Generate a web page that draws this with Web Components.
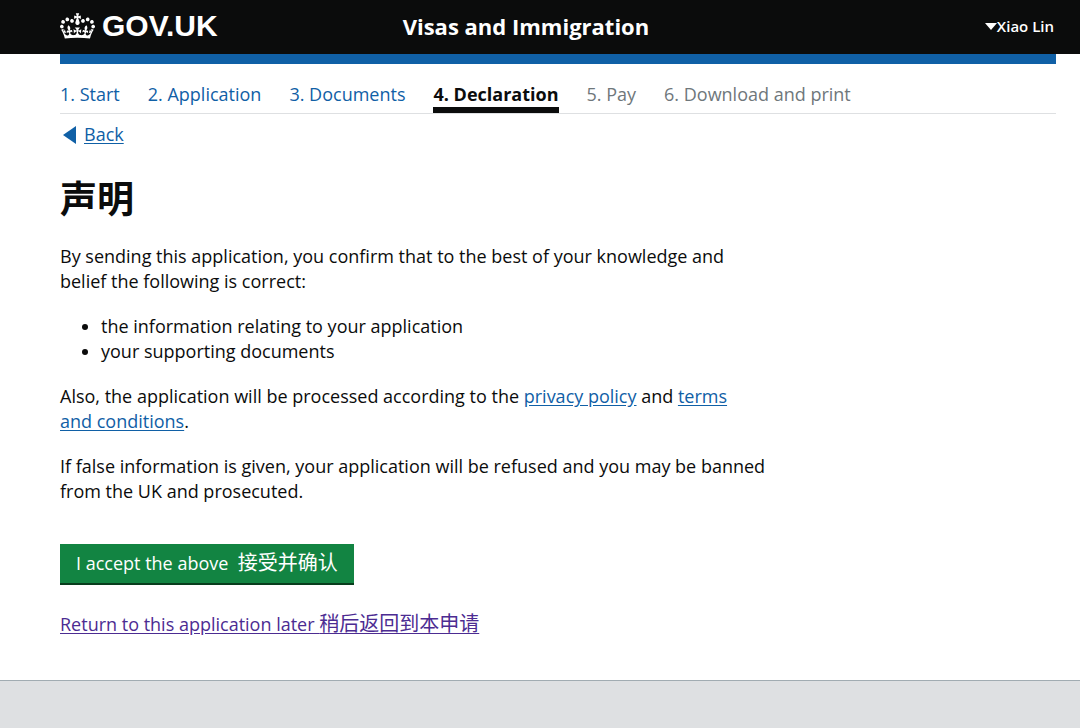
<!DOCTYPE html>
<html lang="en">
<head>
<meta charset="utf-8">
<meta name="viewport" content="width=device-width, initial-scale=1">
<title>Declaration - Visas and Immigration - GOV.UK</title>
<style>
body {
    margin: 0;
    min-height: 100vh;
    display: flex;
    flex-direction: column;
    color: #0b0c0c;
    background-color: #fff;
    font-family: "Open Sans", "Noto Sans CJK SC", sans-serif;
    font-size: 18px;
    line-height: 25px;
}
</style>
</head>
<body>
<visa-header user="Xiao Lin">Visas and Immigration</visa-header>

<page-container>
    <step-nav>
        <step-link href="#start">1. Start</step-link>
        <step-link href="#application">2. Application</step-link>
        <step-link href="#documents">3. Documents</step-link>
        <step-link current>4. Declaration</step-link>
        <step-link>5. Pay</step-link>
        <step-link>6. Download and print</step-link>
    </step-nav>
    <back-link href="#documents">Back</back-link>
    <declaration-form></declaration-form>
</page-container>

<page-footer></page-footer>

<script>
const template_header = document.createElement("template");
template_header.innerHTML = `
<style>
:host {
    display: block;
    color: #fff;
    background-color: #0b0c0c;
}

.wrapper {
    display: grid;
    grid-template-columns: 1fr 2fr;
    gap: 16px;
    align-items: center;
    margin: 0 24px 0 60px;
    padding: 11px 0 13px;
}

.logo {
    display: flex;
    align-items: center;
    gap: 7px;
    color: inherit;
    font: bold 30px/30px "Liberation Sans", Arial, sans-serif;
    text-decoration: none;
}

.right {
    display: flex;
    justify-content: space-between;
    align-items: center;
}

.title {
    font-size: 22px;
    font-weight: bold;
}

button {
    display: flex;
    align-items: center;
    padding: 0 2px;
    border: 0;
    color: inherit;
    background: none;
    font: inherit;
    font-size: 15px;
    font-weight: 600;
    cursor: pointer;
}
</style>

<header class="wrapper">
    <a class="logo" href="#home">
        <svg width="35" height="26" viewBox="0 0 132 97" fill="currentColor" aria-hidden="true">
            <path fill-rule="evenodd" d="M25 30.2c3.5 1.5 7.7-.2 9.1-3.7 1.5-3.6-.2-7.8-3.9-9.2-3.6-1.4-7.6.3-9.1 3.9-1.4 3.5.3 7.5 3.9 9zM9 39.5c3.6 1.5 7.8-.2 9.2-3.7 1.5-3.6-.2-7.8-3.9-9.1-3.6-1.5-7.6.2-9.1 3.8-1.4 3.5.3 7.5 3.8 9zM4.4 57.2c3.5 1.5 7.7-.2 9.1-3.8 1.5-3.6-.2-7.7-3.9-9.1-3.5-1.5-7.6.3-9.1 3.8-1.4 3.5.3 7.6 3.9 9.1zm38.3-21.4c3.5 1.5 7.7-.2 9.1-3.8 1.5-3.6-.2-7.7-3.9-9.1-3.6-1.5-7.6.3-9.1 3.8-1.3 3.6.4 7.7 3.9 9.1zm64.4-5.6c-3.6 1.5-7.8-.2-9.1-3.7-1.5-3.6.2-7.8 3.8-9.2 3.6-1.4 7.7.3 9.2 3.9 1.3 3.5-.4 7.5-3.9 9zm15.9 9.3c-3.6 1.5-7.7-.2-9.1-3.7-1.5-3.6.2-7.8 3.7-9.1 3.6-1.5 7.7.2 9.2 3.8 1.5 3.5-.3 7.5-3.8 9zm4.7 17.7c-3.6 1.5-7.8-.2-9.2-3.8-1.5-3.6.2-7.7 3.9-9.1 3.6-1.5 7.7.3 9.2 3.8 1.3 3.5-.4 7.6-3.9 9.1zM89.3 35.8c-3.6 1.5-7.8-.2-9.2-3.8-1.4-3.6.2-7.7 3.9-9.1 3.6-1.5 7.7.3 9.2 3.8 1.4 3.6-.3 7.7-3.9 9.1zM69.7 17.7l8.9 4.7V9.3l-8.9 2.8c-.2-.3-.5-.6-.9-.9L72.4 0H59.6l3.5 11.2c-.3.3-.6.5-.9.9l-8.8-2.8v13.1l8.8-4.7c.3.3.6.7.9.9l-5 15.4v.1c-.2.8-.4 1.6-.4 2.4 0 4.1 3.1 7.5 7 8.1h.2c.3 0 .7.1 1 .1.4 0 .7 0 1-.1h.2c4-.6 7.1-4.1 7.1-8.1 0-.8-.1-1.7-.4-2.4V34l-5.1-15.4c.4-.2.7-.6 1-.9zM66 92.8c16.9 0 32.8 1.1 47.1 3.2 4-16.9 8.9-26.7 14-33.5l-9.6-3.4c1 4.9 1.1 7.2 0 10.2-1.5-1.4-3-4.3-4.2-8.7L108.6 76c2.8-2 5-3.2 7.5-3.3-4.4 9.4-10 11.9-13.6 11.2-4.3-.8-6.3-4.6-5.6-7.9 1-4.7 5.7-5.9 8-.5 4.3-8.7-3-11.4-7.6-8.8 7.1-7.2 7.9-13.5 2.1-21.1-8 6.1-8.1 12.3-4.5 20.8-4.7-5.4-12.1-2.5-9.5 6.2 3.4-5.2 7.9-2 7.2 3.1-.6 4.3-6.4 7.8-13.5 7.2-10.3-.9-10.9-8-11.2-13.8 2.5-.5 7.1 1.8 11 7.3L80.2 60c-4.1 4.4-8 5.3-12.3 5.4 1.4-4.4 8-11.6 8-11.6H55.5s6.4 7.2 7.9 11.6c-4.2-.1-8-1-12.3-5.4l1.4 16.4c3.9-5.5 8.5-7.7 10.9-7.3-.3 5.8-.9 12.8-11.1 13.8-7.2.6-12.9-2.9-13.5-7.2-.7-5 3.8-8.3 7.1-3.1 2.7-8.7-4.6-11.6-9.4-6.2 3.7-8.5 3.6-14.7-4.6-20.8-5.8 7.6-5 13.9 2.2 21.1-4.7-2.6-11.9.1-7.7 8.8 2.3-5.5 7.1-4.2 8.1.5.7 3.3-1.3 7.1-5.7 7.9-3.5.7-9-1.8-13.5-11.2 2.5.1 4.7 1.3 7.5 3.3l-4.7-15.4c-1.2 4.4-2.7 7.2-4.3 8.7-1.1-3-.9-5.3 0-10.2l-9.5 3.4c5 6.9 9.9 16.7 14 33.5 14.8-2.1 30.8-3.2 47.7-3.2z"/>
        </svg>
        <span>GOV.UK</span>
    </a>
    <div class="right">
        <span class="title"><slot></slot></span>
        <button type="button" aria-haspopup="true">
            <svg width="12" height="7" viewBox="0 0 12 7" fill="currentColor" aria-hidden="true"><path d="M0 0h12L6 7z"/></svg>
            <span class="user"></span>
        </button>
    </div>
</header>
`;

class VisaHeader extends HTMLElement {
  constructor() {
    super();
    this.attachShadow({ mode: "open" });
    this.shadowRoot.appendChild(template_header.content.cloneNode(true));
    this.shadowRoot.querySelector(".user").textContent = this.getAttribute("user");
  }
}

const template_container = document.createElement("template");
template_container.innerHTML = `
<style>
:host {
    display: block;
    margin: 0 24px 0 60px;
    border-top: 10px solid #1060a6;
}
</style>
<slot></slot>
`;

class PageContainer extends HTMLElement {
  constructor() {
    super();
    this.attachShadow({ mode: "open" });
    this.shadowRoot.appendChild(template_container.content.cloneNode(true));
  }
}

const template_nav = document.createElement("template");
template_nav.innerHTML = `
<style>
:host {
    display: block;
}

nav {
    display: flex;
    flex-wrap: wrap;
    gap: 0 28px;
    padding-top: 18px;
    border-bottom: 1px solid #dee0e2;
}
</style>
<nav aria-label="Application steps"><slot></slot></nav>
`;

class StepNav extends HTMLElement {
  constructor() {
    super();
    this.attachShadow({ mode: "open" });
    this.shadowRoot.appendChild(template_nav.content.cloneNode(true));
  }
}

const template_step = document.createElement("template");
template_step.innerHTML = `
<style>
:host {
    display: block;
    color: #6f777b;
    border-bottom: 6px solid transparent;
}

:host([current]) {
    color: #0b0c0c;
    border-bottom-color: #0b0c0c;
    font-weight: bold;
}

a {
    color: #1060a6;
    text-decoration: none;
}
</style>
`;

class StepLink extends HTMLElement {
  constructor() {
    super();
    this.attachShadow({ mode: "open" });
    this.shadowRoot.appendChild(template_step.content.cloneNode(true));
    // steps that cannot be opened yet have no href
    const step = document.createElement(this.hasAttribute("href") ? "a" : "span");
    if (this.hasAttribute("href")) {
      step.setAttribute("href", this.getAttribute("href"));
    }
    if (this.hasAttribute("current")) {
      step.setAttribute("aria-current", "step");
    }
    step.appendChild(document.createElement("slot"));
    this.shadowRoot.appendChild(step);
  }
}

const template_back = document.createElement("template");
template_back.innerHTML = `
<style>
:host {
    display: block;
    padding: 8px 0 0 3px;
}

.wrapper {
    display: flex;
    align-items: center;
    gap: 8px;
}

svg {
    fill: #1060a6;
}

a {
    color: #1060a6;
    text-underline-offset: 2px;
}
</style>
<div class="wrapper">
    <svg width="13" height="18" viewBox="0 0 13 18" aria-hidden="true"><path d="M13 0v18L0 9z"/></svg>
    <a><slot></slot></a>
</div>
`;

class BackLink extends HTMLElement {
  constructor() {
    super();
    this.attachShadow({ mode: "open" });
    this.shadowRoot.appendChild(template_back.content.cloneNode(true));
    this.shadowRoot.querySelector("a").setAttribute("href", this.getAttribute("href"));
  }
}

const template_declaration = document.createElement("template");
template_declaration.innerHTML = `
<style>
:host {
    display: block;
    padding-bottom: 43px;
}

.text {
    max-width: 71%;
}

h1 {
    margin: 24px 0 18px;
    font-size: 37px;
    font-weight: bold;
    line-height: 55px;
}

p {
    margin: 0 0 20px;
}

ul {
    margin: 0 0 20px;
    padding-left: 41px;
}

a {
    color: #1060a6;
    text-underline-offset: 2px;
}

a.later {
    color: #4c2c92;
}

span[lang="zh"] {
    font-size: 20px;
    line-height: 20px;
}

button {
    display: block;
    margin: 40px 0 27px;
    padding: 7px 16px;
    border: 0;
    border-bottom: 2px solid #083d1d;
    color: #fff;
    background-color: #128442;
    font: inherit;
    cursor: pointer;
}
</style>

<main>
    <div class="text">
        <h1 lang="zh">声明</h1>
        <p>By sending this application, you confirm that to the best of your knowledge and belief the following is correct:</p>
        <ul>
            <li>the information relating to your application</li>
            <li>your supporting documents</li>
        </ul>
        <p>Also, the application will be processed according to the <a href="#privacy">privacy policy</a> and <a href="#terms">terms and&nbsp;conditions</a>.</p>
        <p>If false information is given, your application will be refused and you may be banned from the UK and prosecuted.</p>
    </div>
    <button type="button">I accept the above&nbsp; <span lang="zh">接受并确认</span></button>
    <a class="later" href="#later">Return to this application later <span lang="zh">稍后返回到本申请</span></a>
</main>
`;

class DeclarationForm extends HTMLElement {
  constructor() {
    super();
    this.attachShadow({ mode: "open" });
    this.shadowRoot.appendChild(template_declaration.content.cloneNode(true));
  }
}

const template_footer = document.createElement("template");
template_footer.innerHTML = `
<style>
:host {
    display: block;
    flex: 1;
    border-top: 1px solid #a1acb2;
    background-color: #dee0e2;
}
</style>
<footer></footer>
`;

class PageFooter extends HTMLElement {
  constructor() {
    super();
    this.attachShadow({ mode: "open" });
    this.shadowRoot.appendChild(template_footer.content.cloneNode(true));
  }
}

window.customElements.define("visa-header", VisaHeader);
window.customElements.define("page-container", PageContainer);
window.customElements.define("step-nav", StepNav);
window.customElements.define("step-link", StepLink);
window.customElements.define("back-link", BackLink);
window.customElements.define("declaration-form", DeclarationForm);
window.customElements.define("page-footer", PageFooter);
</script>
</body>
</html>
